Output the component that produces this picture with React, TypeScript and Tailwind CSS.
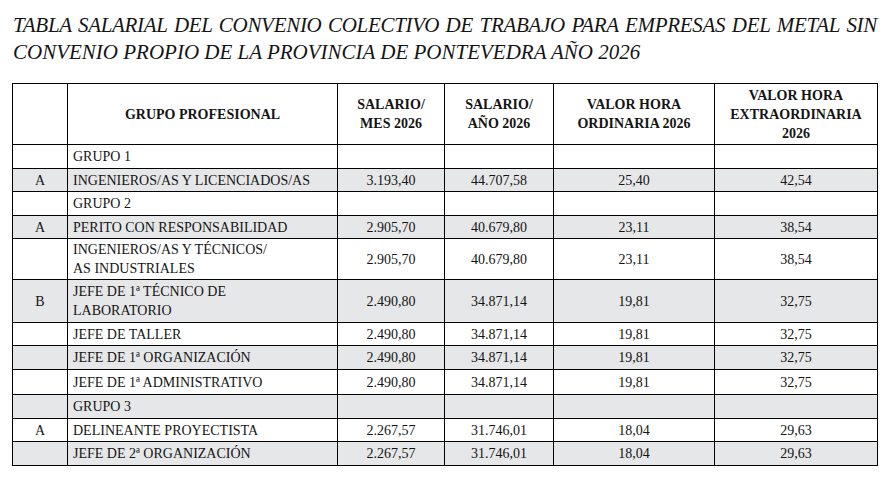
import React from "react";

type Row = {
  code?: string;
  name: React.ReactNode;
  mes?: string;
  ano?: string;
  ord?: string;
  ext?: string;
  shaded?: boolean;
  h: string;
};

const rows: Row[] = [
  { name: "GRUPO 1", h: "h-[24px]" },
  { code: "A", name: "INGENIEROS/AS Y LICENCIADOS/AS", mes: "3.193,40", ano: "44.707,58", ord: "25,40", ext: "42,54", shaded: true, h: "h-[23px]" },
  { name: "GRUPO 2", h: "h-[24px]" },
  { code: "A", name: "PERITO CON RESPONSABILIDAD", mes: "2.905,70", ano: "40.679,80", ord: "23,11", ext: "38,54", shaded: true, h: "h-[23px]" },
  {
    name: (
      <>
        INGENIEROS/AS Y TÉCNICOS/
        <br />
        AS INDUSTRIALES
      </>
    ),
    mes: "2.905,70", ano: "40.679,80", ord: "23,11", ext: "38,54", h: "h-[41px]",
  },
  {
    code: "B",
    name: (
      <>
        JEFE DE 1ª TÉCNICO DE
        <br />
        LABORATORIO
      </>
    ),
    mes: "2.490,80", ano: "34.871,14", ord: "19,81", ext: "32,75", shaded: true, h: "h-[43px]",
  },
  { name: "JEFE DE TALLER", mes: "2.490,80", ano: "34.871,14", ord: "19,81", ext: "32,75", h: "h-[23px]" },
  { name: "JEFE DE 1ª ORGANIZACIÓN", mes: "2.490,80", ano: "34.871,14", ord: "19,81", ext: "32,75", shaded: true, h: "h-[24px]" },
  { name: "JEFE DE 1ª ADMINISTRATIVO", mes: "2.490,80", ano: "34.871,14", ord: "19,81", ext: "32,75", h: "h-[25px]" },
  { name: "GRUPO 3", shaded: true, h: "h-[24px]" },
  { code: "A", name: "DELINEANTE PROYECTISTA", mes: "2.267,57", ano: "31.746,01", ord: "18,04", ext: "29,63", h: "h-[23px]" },
  { name: "JEFE DE 2ª ORGANIZACIÓN", mes: "2.267,57", ano: "31.746,01", ord: "18,04", ext: "29,63", shaded: true, h: "h-[24px]" },
];

const cell = "border border-black p-0 align-middle";

export default function App() {
  return (
    <div
      className="w-[891px] h-[477px] bg-white text-[#141414] overflow-hidden"
      style={{ fontFamily: '"Liberation Serif", serif' }}
    >
      <div className="pl-[13px] pr-[14px] pt-[12px] italic text-[21px] leading-[27px]">
        <p className="whitespace-nowrap tracking-[-0.3px] [text-align:justify] [text-align-last:justify]">
          TABLA SALARIAL DEL CONVENIO COLECTIVO DE TRABAJO PARA EMPRESAS DEL METAL SIN
        </p>
        <p className="whitespace-nowrap">CONVENIO PROPIO DE LA PROVINCIA DE PONTEVEDRA AÑO 2026</p>
      </div>
      <div className="pl-[12px] pt-[17px]">
        <table className="table-fixed border-collapse w-[865px] text-[14px]">
          <colgroup>
            <col className="w-[55px]" />
            <col className="w-[270px]" />
            <col className="w-[107px]" />
            <col className="w-[109px]" />
            <col className="w-[161px]" />
            <col className="w-[163px]" />
          </colgroup>
          <thead>
            <tr className="h-[61px] font-bold text-center leading-[19px]">
              <th className={cell}></th>
              <th className={cell}>GRUPO PROFESIONAL</th>
              <th className={cell}>
                SALARIO/
                <br />
                MES 2026
              </th>
              <th className={cell}>
                SALARIO/
                <br />
                AÑO 2026
              </th>
              <th className={cell}>
                VALOR HORA
                <br />
                ORDINARIA 2026
              </th>
              <th className={cell}>
                VALOR HORA
                <br />
                EXTRAORDINARIA
                <br />
                2026
              </th>
            </tr>
          </thead>
          <tbody>
            {rows.map((r, i) => (
              <tr key={i} className={`${r.h} ${r.shaded ? "bg-[#e6e7e8]" : "bg-white"} leading-[19px]`}>
                <td className={`${cell} text-center`}>{r.code ?? ""}</td>
                <td className={`${cell} text-left pl-[5px]`}>{r.name}</td>
                <td className={`${cell} text-center`}>{r.mes ?? ""}</td>
                <td className={`${cell} text-center`}>{r.ano ?? ""}</td>
                <td className={`${cell} text-center`}>{r.ord ?? ""}</td>
                <td className={`${cell} text-center`}>{r.ext ?? ""}</td>
              </tr>
            ))}
          </tbody>
        </table>
      </div>
    </div>
  );
}
